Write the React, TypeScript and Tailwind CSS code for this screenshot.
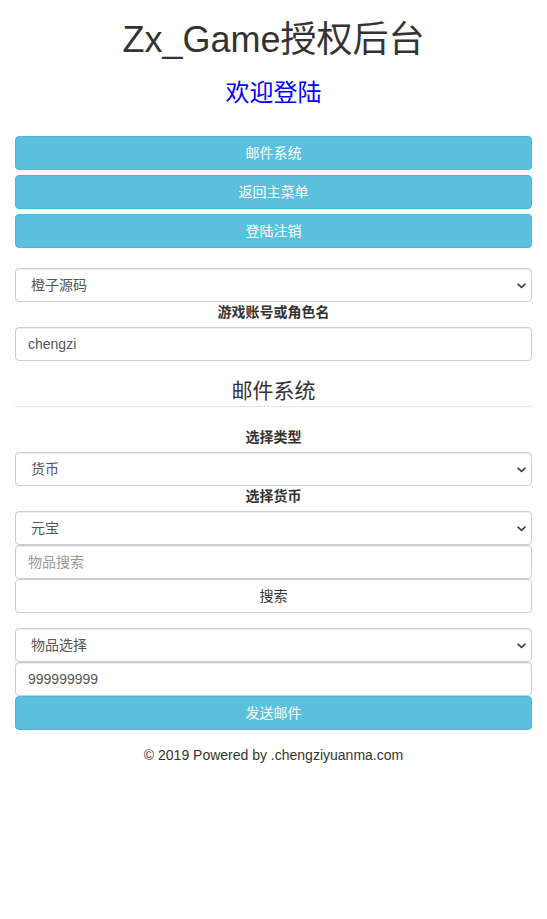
import React from "react";

const font = "font-['Liberation_Sans','Noto_Sans_CJK_SC',sans-serif]";

function Chevron() {
  return (
    <svg
      className="pointer-events-none absolute right-[6px] top-[15px]"
      width="9"
      height="6"
      viewBox="0 0 9 6"
      fill="none"
    >
      <path d="M1 1.2 L4.5 4.4 L8 1.2" stroke="#444" strokeWidth="1.7" strokeLinecap="round" strokeLinejoin="round" />
    </svg>
  );
}

function Select({ value, className = "" }: { value: string; className?: string }) {
  return (
    <div className={`relative ${className}`}>
      <select
        defaultValue={value}
        className="block h-[34px] w-full appearance-none rounded-[4px] border border-[#ccc] bg-white pl-[15px] pr-[24px] text-[14px] text-[#555] shadow-[inset_0_1px_1px_rgba(0,0,0,0.075)] outline-none"
      >
        <option>{value}</option>
      </select>
      <Chevron />
    </div>
  );
}

function Input({ value, placeholder, className = "" }: { value?: string; placeholder?: string; className?: string }) {
  return (
    <input
      defaultValue={value}
      placeholder={placeholder}
      className={`block h-[34px] w-full rounded-[4px] border border-[#ccc] bg-white px-[12px] text-[14px] text-[#555] placeholder:text-[#999] shadow-[inset_0_1px_1px_rgba(0,0,0,0.075)] outline-none ${className}`}
    />
  );
}

function InfoButton({ label, className = "" }: { label: string; className?: string }) {
  return (
    <button className={`block h-[34px] w-full rounded-[4px] border border-[#46b8da] bg-[#5bc0de] text-center text-[14px] text-white ${className}`}>
      {label}
    </button>
  );
}

function Label({ text, className = "" }: { text: string; className?: string }) {
  return (
    <div className={`h-[20px] text-center text-[14px] leading-[20px] font-bold text-[#333] ${className}`}>{text}</div>
  );
}

export default function App() {
  return (
    <div className={`${font} min-h-[919px] w-full bg-white px-[15px] text-[14px] text-[#333]`}>
      <h1 className="pt-[20px] text-center text-[36px] leading-[40px] font-normal text-[#333]">Zx_Game授权后台</h1>
      <h3 className="mt-[20px] text-center text-[24px] leading-[26px] font-normal text-[#0000ff]">欢迎登陆</h3>

      <div className="mt-[30px] flex flex-col gap-[5px]">
        <InfoButton label="邮件系统" />
        <InfoButton label="返回主菜单" />
        <InfoButton label="登陆注销" />
      </div>

      <Select value="橙子源码" className="mt-[20px]" />
      <Label text="游戏账号或角色名" />
      <Input value="chengzi" className="mt-[5px]" />

      <div className="mt-[15px] h-[31px] border-b border-[#e5e5e5] text-center text-[21px] leading-[30px]">邮件系统</div>

      <Label text="选择类型" className="mt-[20px]" />
      <Select value="货币" className="mt-[5px]" />
      <Label text="选择货币" />
      <Select value="元宝" className="mt-[5px]" />
      <Input placeholder="物品搜索" />
      <button className="block h-[34px] w-full rounded-[4px] border border-[#ccc] bg-white text-center text-[14px] text-[#333]">
        搜索
      </button>

      <Select value="物品选择" className="mt-[15px]" />
      <Input value="999999999" />
      <InfoButton label="发送邮件" />

      <div className="mt-[15px] text-center text-[14px] leading-[20px] text-[#333]">© 2019 Powered by .chengziyuanma.com</div>
    </div>
  );
}
